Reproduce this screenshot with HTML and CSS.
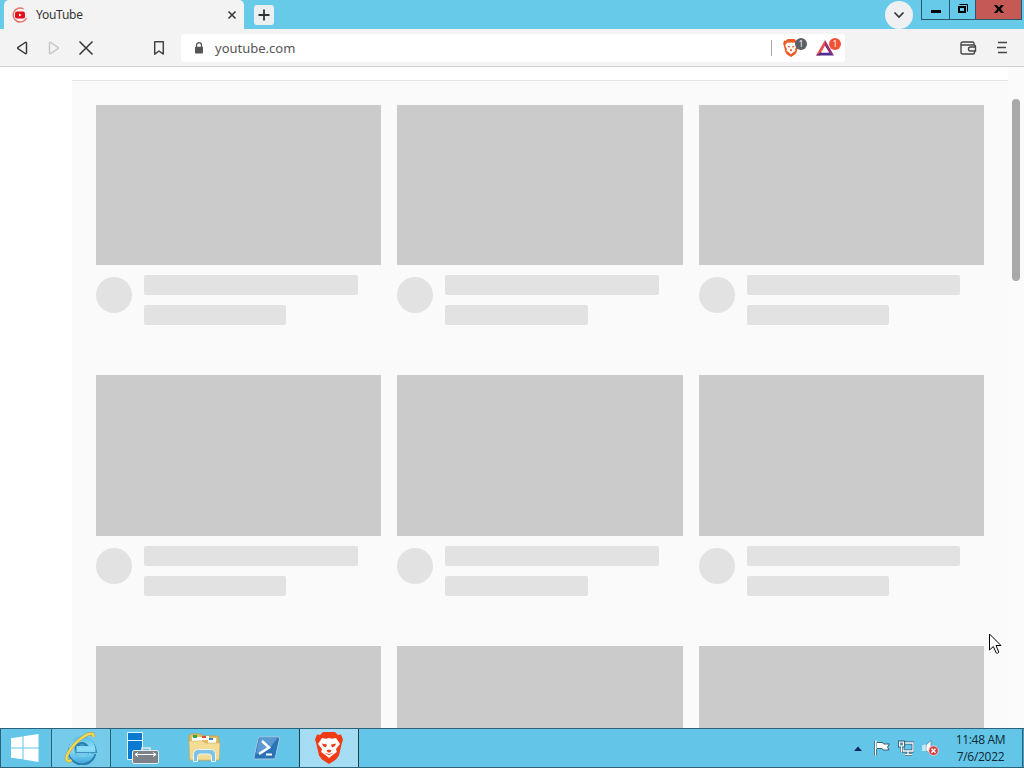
FILE: index.html
```html
<!DOCTYPE html>
<html lang="en">
<head>
  <meta charset="UTF-8">
  <title>YouTube</title>
  <link rel="stylesheet" href="styles.css">
</head>
<body>
  <div class="tab-bar">
    <div class="tab">
      <svg class="favicon" width="16" height="16" viewBox="0 0 16 16">
        <path d="M11.5 1.8A7 7 0 1 0 14.500 11" fill="none" stroke="#e4746a" stroke-width="1.5"/>
        <rect x="3" y="4.5" width="10" height="7" rx="2" fill="#e3101c"/>
        <path d="M7 6.500v3L9.600 8z" fill="#fff"/>
      </svg>
      <span class="tab-title">YouTube</span>
      <svg width="10" height="10" viewBox="0 0 10 10"><path d="M1.5 1.5l7 7M8.5 1.5l-7 7" stroke="#333" stroke-width="1.5"/></svg>
    </div>
    <div class="new-tab">
      <svg width="12" height="12" viewBox="0 0 12 12"><path d="M6 .5v11M.5 6h11" stroke="#333" stroke-width="1.8"/></svg>
    </div>
    <div class="tab-search">
      <svg width="12" height="8" viewBox="0 0 12 8"><path d="M1.5 1.5L6 6l4.500-4.500" fill="none" stroke="#333" stroke-width="1.6"/></svg>
    </div>
    <div class="window-buttons">
      <div class="win-btn minimize"><svg width="28" height="19" viewBox="0 0 28 19"><path d="M9 10h10v3H9z"/></svg></div>
      <div class="win-btn restore"><svg width="26" height="19" viewBox="0 0 26 19"><path d="M9 7h6v5H9z" fill="none" stroke="#000" stroke-width="2"/><path d="M9.500 4.500h8v7" fill="none" stroke="#000"/></svg></div>
      <div class="win-btn close"><svg width="46" height="19" viewBox="0 0 46 19"><path d="M18 5h3l2 2.500L25 5h3l-3.300 4L28 13h-3l-2-2.500-2 2.500h-3l3.300-4z"/></svg></div>
    </div>
  </div>

  <div class="toolbar">
    <svg class="nav-icon" width="16" height="16" viewBox="0 0 16 16"><path d="M12.500 3.200v9.600c0 .9-.7 1.100-1.300.7L4 8.700a.9.900 0 0 1 0-1.400l7.200-4.800c.6-.4 1.300-.2 1.300.7z" fill="none" stroke="#3c3c3c" stroke-width="1.500"/></svg>
    <svg class="nav-icon" width="16" height="16" viewBox="0 0 16 16"><path d="M3.500 3.200v9.600c0 .9.700 1.100 1.300.7L12 8.700a.9.900 0 0 0 0-1.400L4.800 2.500c-.6-.4-1.300-.2-1.300.7z" fill="none" stroke="#c6c6c6" stroke-width="1.400"/></svg>
    <svg class="nav-icon" width="16" height="16" viewBox="0 0 16 16"><path d="M1.500 1.500l13 13M14.500 1.500l-13 13" stroke="#333" stroke-width="1.500"/></svg>
    <svg class="bookmark" width="12" height="16" viewBox="0 0 12 16"><path d="M1.700 1.700h8.600v12.400L6 11l-4.300 3.100z" fill="none" stroke="#444" stroke-width="1.500" stroke-linejoin="round"/></svg>
    <div class="address">
      <svg width="10" height="12" viewBox="0 0 10 12"><path d="M2.500 5.500V3.200a2.500 2.500 0 0 1 5 0v2.300" fill="none" stroke="#555" stroke-width="1.300"/><rect x="1" y="4.700" width="8" height="6.800" rx=".8" fill="#555"/></svg>
      <span class="url">youtube.com</span>
      <div class="shields">
        <span class="divider"></span>
        <div class="shield">
          <svg width="16" height="18" viewBox="0 0 28 32">
            <path d="M8 0h12l3 3 3-.5 2 5-1 3-3 13-3 4-7 4.500-7-4.500-3-4-3-13-1-3 2-5L5 3z" fill="#ee5a24"/>
            <path d="M7 6l4 .8L14 6l3 .8L21 6l3.500 6-3 5 .3 4-4.800 3.500-3 2.500-3-2.500L6.200 21l.3-4-3-5z" fill="#fff"/>
            <path d="M7 12l5 1-1 3zM21 12l-5 1 1 3zM12 18h4l-.5 3-1.500 1-1.500-1z" fill="#ee5a24"/>
          </svg>
          <span class="count gray">1</span>
        </div>
        <div class="shield">
          <svg width="18" height="16" viewBox="0 0 18 16">
            <path d="M9 0L0 15.500h4.300L9 6z" fill="#e7504b"/>
            <path d="M9 0v6l4 7 5 2.500z" fill="#96297a"/>
            <path d="M0 15.500h18L13 12.500H4.300z" fill="#512f91"/>
            <path d="M9 6l-4 6.500h8z" fill="#fff"/>
          </svg>
          <span class="count orange">1</span>
        </div>
      </div>
    </div>
    <svg class="wallet" width="17" height="14" viewBox="0 0 17 14"><path d="M14 4V2.500a1.500 1.500 0 0 0-1.500-1.500H2.800A1.800 1.800 0 0 0 1 2.800V11a2 2 0 0 0 2 2h10a1.500 1.500 0 0 0 1.500-1.500V10M1.500 4H14a1.500 1.500 0 0 1 1.500 1.500V10h-5a2 2 0 0 1 0-4h5" fill="none" stroke="#444" stroke-width="1.400"/></svg>
    <svg width="10" height="13" viewBox="0 0 10 13"><path d="M1 1.500h9M0 6.500h9M1 11.500h9" stroke="#444" stroke-width="1.500"/></svg>
  </div>

  <div class="page">
    <div class="guide"></div>
    <div class="content">
      <div class="chips"></div>
      <div class="grid">
        <div class="card"><div class="thumb"></div><div class="details"><div class="avatar"></div><div class="lines"><div class="line"></div><div class="line short"></div></div></div></div>
        <div class="card"><div class="thumb"></div><div class="details"><div class="avatar"></div><div class="lines"><div class="line"></div><div class="line short"></div></div></div></div>
        <div class="card"><div class="thumb"></div><div class="details"><div class="avatar"></div><div class="lines"><div class="line"></div><div class="line short"></div></div></div></div>
        <div class="card"><div class="thumb"></div><div class="details"><div class="avatar"></div><div class="lines"><div class="line"></div><div class="line short"></div></div></div></div>
        <div class="card"><div class="thumb"></div><div class="details"><div class="avatar"></div><div class="lines"><div class="line"></div><div class="line short"></div></div></div></div>
        <div class="card"><div class="thumb"></div><div class="details"><div class="avatar"></div><div class="lines"><div class="line"></div><div class="line short"></div></div></div></div>
        <div class="card"><div class="thumb"></div></div>
        <div class="card"><div class="thumb"></div></div>
        <div class="card"><div class="thumb"></div></div>
      </div>
    </div>
    <div class="scrollbar"><div class="scroll-thumb"></div></div>
  </div>

  <div class="taskbar">
    <div class="task start">
      <svg width="28" height="28" viewBox="0 0 28 28"><path d="M0 4.200l11.500-1.700v11H0zM12.500 2.300L27.500 0v13.500h-15zM0 14.500h11.500v10.800L0 23.700zM12.500 14.500h15V28l-15-2.500z" fill="#fff"/></svg>
    </div>
    <div class="task open">
      <svg width="34" height="34" viewBox="0 0 34 34">
        <defs><linearGradient id="ie" gradientUnits="userSpaceOnUse" x1="0" y1="5" x2="0" y2="31"><stop stop-color="#58bce6"/><stop offset=".5" stop-color="#8fe0f8"/><stop offset="1" stop-color="#48afe0"/></linearGradient></defs>
        <path d="M28.500 22.500A10.500 10.500 0 1 1 28.500 18H12" fill="none" stroke="#2a7fae" stroke-width="7.500"/>
        <path d="M27.800 22.500A10.500 10.500 0 1 1 28.500 18H12.500" fill="none" stroke="url(#ie)" stroke-width="5.800"/>
        <path d="M29.500 6c.5-4-3-4.500-8-1.500C11 10.500 2 22.500 2.500 28c.3 2.500 2.500 2.500 5 1" fill="none" stroke="#a8963c" stroke-width="3.200"/>
        <path d="M29.500 6c.5-4-3-4.500-8-1.500C11 10.500 2 22.500 2.500 28c.3 2.500 2.500 2.500 5 1" fill="none" stroke="#f3d957" stroke-width="2.300"/>
      </svg>
    </div>
    <div class="task server">
      <svg width="34" height="34" viewBox="0 0 34 34">
        <path d="M1.500 1.500h15v27h-15z" fill="#0a7ad0" stroke="#e2f4fc"/>
        <path d="M2 9.500h14" stroke="#e2f4fc"/>
        <path d="M16 20v-3h8v3" fill="none" stroke="#e4e8ea" stroke-width="1.500"/>
        <rect x="6.500" y="19.500" width="26" height="13" rx="1.500" fill="#7c8388" stroke="#e6eaec"/>
        <path d="M9 23.500h21M12 21.500l-3 2 3 2M27 21.500l3 2-3 2" fill="none" stroke="#fff"/>
      </svg>
    </div>
    <div class="task">
      <svg width="34" height="30" viewBox="0 0 34 30">
        <path d="M1 3l2-2h9l2 2h16l1 4v20H2z" fill="#e3bd61" stroke="#c3a250"/>
        <path d="M4 4h10v5H4z" fill="#fff"/><path d="M5 2h4v3H5z" fill="#31a64b"/>
        <path d="M14 3h7v4h-7z" fill="#fff"/><path d="M14 3h4v2h-4z" fill="#dc4b31"/>
        <path d="M20 5h8v5h-8z" fill="#fff"/><path d="M21 5h4v2h-4z" fill="#3585c9"/>
        <path d="M1 8h14l2 2h15l-1 17H2z" fill="#f3dc94" stroke="#d0b466" stroke-width=".6"/>
        <path d="M5.500 28.500V22q0-5.500 5-5.500h12q5 0 5 5.500v6.500h-4V24q0-3-3-3h-8q-3 0-3 3v4.500z" fill="#7fc2e4" stroke="#e6f7fc"/>
      </svg>
    </div>
    <div class="task">
      <svg width="28" height="24" viewBox="0 0 28 24">
        <path d="M7 1h18q2 0 1.500 2l-4 18q-.4 2-2.400 2H2.500q-2 0-1.500-2L5 3q.4-2 2-2z" fill="#2874b7" stroke="#a6cae5"/>
        <path d="M7.500 2h17L17 12 3 18l3-15z" fill="#5b9ad0"/>
        <path d="M9 5l7 6.500L6 18" fill="none" stroke="#fff" stroke-width="2.600"/><path d="M13 18.500h6" stroke="#fff" stroke-width="2"/>
      </svg>
    </div>
    <div class="task active">
      <svg width="28" height="32" viewBox="0 0 28 32">
        <path d="M8 0h12l3 3 3-.5 2 5-1 3-3 13-3 4-7 4.500-7-4.500-3-4-3-13-1-3 2-5L5 3z" fill="#ef3b16"/>
        <path d="M7 6l4 .8L14 6l3 .8L21 6l4 6-4 5 .8 3-4.800 3.500-3 2.500-3-2.500L6.200 20l.8-3-4-5z" fill="#fff"/>
        <path d="M7 11.500l5 1-1 3-3-1.500zM21 11.500l-5 1 1 3 3-1.500zM11.500 18.500L14 17.500l2.500 1-1 1.500-1.500.8-1.500-.8zM9.500 21.500l2.500-.3 2 1.300 2-1.300 2.500.3-2.500.5-2 1.400-2-1.400z" fill="#ef3b16"/>
      </svg>
    </div>
    <div class="tray">
      <svg width="8" height="5" viewBox="0 0 8 5"><path d="M0 5l4-4.500L8 5z" fill="#10265c"/></svg>
      <svg width="16" height="16" viewBox="0 0 16 16"><path d="M2.500 2.500h6l1 1.500h6l-2 3 1.500 3H9L8 8.500H2.500z" fill="#fff" stroke="#355e72"/><path d="M1.500.5v15" stroke="#fff" stroke-width="2"/><path d="M.5.500v15M2.500 9v6.500" stroke="#355e72" stroke-width=".8"/></svg>
      <svg width="16" height="16" viewBox="0 0 16 16"><path d="M6 3h9v8H5V8M10 12v2M7 14.500h7" fill="none" stroke="#305a70" stroke-width="2.800"/><path d="M6 3h9v8H5V8M10 11v3M7 14.500h7" fill="none" stroke="#fff" stroke-width="1.300"/><path d="M1 1.500h5v5H1zM3.500 6.500v6" fill="none" stroke="#305a70" stroke-width="2.200"/><path d="M1.500 2h4v4h-4zM3.500 6v6.500" fill="#4f90ae" stroke="#fff" stroke-width="1.200"/></svg>
      <svg width="17" height="16" viewBox="0 0 17 16"><path d="M4 5l5-4.500v14L4 10.500z" fill="#fff" stroke="#527f93" stroke-width=".7"/><path d="M1 5v6M3 4.500v6.500" stroke="#fff" stroke-width="1.200"/><circle cx="11.500" cy="10.700" r="4.800" fill="#d83e3e" stroke="#f5dddd" stroke-width=".8"/><path d="M9.500 8.700l4 4M13.500 8.700l-4 4" stroke="#fff" stroke-width="1.500"/></svg>
    </div>
    <div class="clock"><span>11:48 AM</span><span>7/6/2022</span></div>
    <div class="show-desktop"></div>
  </div>

  <svg class="cursor" width="13" height="22" viewBox="0 0 13 22"><path d="M.5 1v16l3.800-3.500 3 6.500q1.200 1 2.500-.8L7 12.500h5z" fill="#fff" stroke="#000"/></svg>
</body>
</html>
```

FILE: styles.css
```css
* {
  box-sizing: border-box;
}
body {
  margin: 0;
  width: 1024px;
  height: 768px;
  overflow: hidden;
  display: flex;
  flex-direction: column;
  font-family: "Noto Sans", "Open Sans", sans-serif;
  color: #333;
}
svg {
  display: block;
  flex-shrink: 0;
}

/* tabs */
.tab-bar {
  height: 29px;
  flex-shrink: 0;
  display: flex;
  background: #67cae9;
}
.tab {
  display: flex;
  align-items: center;
  width: 240px;
  margin-left: 4px;
  padding: 0 7px 0 8px;
  background: #f3f3f3;
  border-radius: 5px 5px 0 0;
}
.tab-title {
  flex: 1;
  margin-left: 8px;
  font-size: 12px;
  letter-spacing: -0.25px;
}
.new-tab {
  display: flex;
  align-items: center;
  justify-content: center;
  width: 20px;
  height: 20px;
  margin: 5px 0 0 10px;
  background: #eceff0;
  border-radius: 3px;
}
.tab-search {
  display: flex;
  align-items: center;
  justify-content: center;
  width: 28px;
  height: 28px;
  margin: 1px 8px 0 auto;
  background: #eef0f1;
  border-radius: 50%;
}
.window-buttons {
  display: flex;
  height: 20px;
  margin-right: 2px;
  border: 1px solid #28566a;
  border-top: none;
}
.win-btn {
  overflow: hidden;
  display: flex;
  justify-content: center;
}
.minimize {
  width: 28px;
  border-right: 1px solid #28566a;
}
.restore {
  width: 26px;
  border-right: 1px solid #28566a;
}
.close {
  width: 45px;
  background: #c45955;
}

/* toolbar */
.toolbar {
  height: 38px;
  flex-shrink: 0;
  display: flex;
  align-items: center;
  padding: 0 17px 0 14px;
  background: #f3f3f3;
  border-bottom: 1px solid #cfcfcf;
}
.nav-icon {
  margin-right: 16px;
}
.bookmark {
  margin-left: 43px;
}
.address {
  display: flex;
  align-items: center;
  width: 664px;
  height: 28px;
  margin-left: 16px;
  padding-left: 13px;
  background: #fff;
  border-radius: 4px;
}
.url {
  margin-left: 11px;
  font-size: 13px;
  color: #555;
}
.shields {
  display: flex;
  align-items: center;
  margin-left: auto;
}
.divider {
  width: 1px;
  height: 16px;
  margin-right: 11px;
  background: #aaa;
}
.shield {
  position: relative;
  width: 33px;
}
.shield + .shield {
  width: 29px;
}
.count {
  position: absolute;
  top: -1px;
  left: 12px;
  width: 12px;
  height: 12px;
  border-radius: 6px;
  font-size: 8px;
  line-height: 12px;
  text-align: center;
  color: #fff;
}
.gray {
  background: #5b6069;
}
.orange {
  background: #f05336;
  top: -2px;
  left: 13px;
}
.wallet {
  margin-left: auto;
  margin-right: 20px;
}

/* loading page */
.page {
  flex: 1;
  min-height: 0;
  display: flex;
  overflow: hidden;
  background: #fff;
}
.guide {
  width: 72px;
}
.content {
  width: 936px;
  background: #fafafa;
}
.chips {
  height: 14px;
  background: #fff;
  border-bottom: 1px solid #e5e5e5;
}
.grid {
  display: grid;
  grid-template-columns: repeat(3, 1fr);
  grid-auto-rows: 270.4px;
  column-gap: 16px;
  padding: 24px;
}
.thumb {
  height: 160.3px;
  background: #cbcbcb;
}
.details {
  display: flex;
  margin-top: 10px;
}
.avatar {
  width: 36px;
  height: 36px;
  margin: 2px 12px 0 0;
  border-radius: 50%;
  background: #e2e2e2;
}
.lines {
  flex: 1;
}
.line {
  width: 90%;
  height: 20px;
  margin-bottom: 10px;
  border-radius: 2px;
  background: #e2e2e2;
}
.short {
  width: 60%;
}
.scrollbar {
  width: 16px;
  padding: 32px 4px 0;
  background: #fbfbfb;
}
.scroll-thumb {
  height: 182px;
  border-radius: 4px;
  background: #a9a9a9;
}

/* taskbar */
.taskbar {
  height: 40px;
  flex-shrink: 0;
  display: flex;
  background: #63c5e7;
  border: 1px solid #2c6279;
  border-right: none;
}
.task {
  width: 62px;
  display: flex;
  align-items: center;
  justify-content: center;
}
.start {
  width: 51px;
  padding-right: 3px;
  border-right: 1px solid #2c6279;
}
.open {
  width: 59px;
  background: #75cbe9;
  border-right: 1px solid #2c6279;
}
.server {
  width: 63px;
}
.active {
  width: 60px;
  background: #a5def4;
  border: solid #1f3c48;
  border-width: 0 1px;
}
.task + .active {
  margin-left: 1px;
}
.tray {
  display: flex;
  align-items: center;
  gap: 8px;
  margin-left: auto;
}
.tray svg:first-child {
  margin-right: 4px;
}
.clock {
  width: 83px;
  display: flex;
  flex-direction: column;
  align-items: center;
  padding-top: 2px;
  font-family: "Open Sans", sans-serif;
  font-size: 12px;
  line-height: 17px;
  letter-spacing: -0.3px;
  color: #0c2836;
}
.show-desktop {
  width: 2px;
  border-left: 1px solid #2c6279;
  background: #4e9fbd;
}

.cursor {
  position: absolute;
  left: 989px;
  top: 633px;
}
```
